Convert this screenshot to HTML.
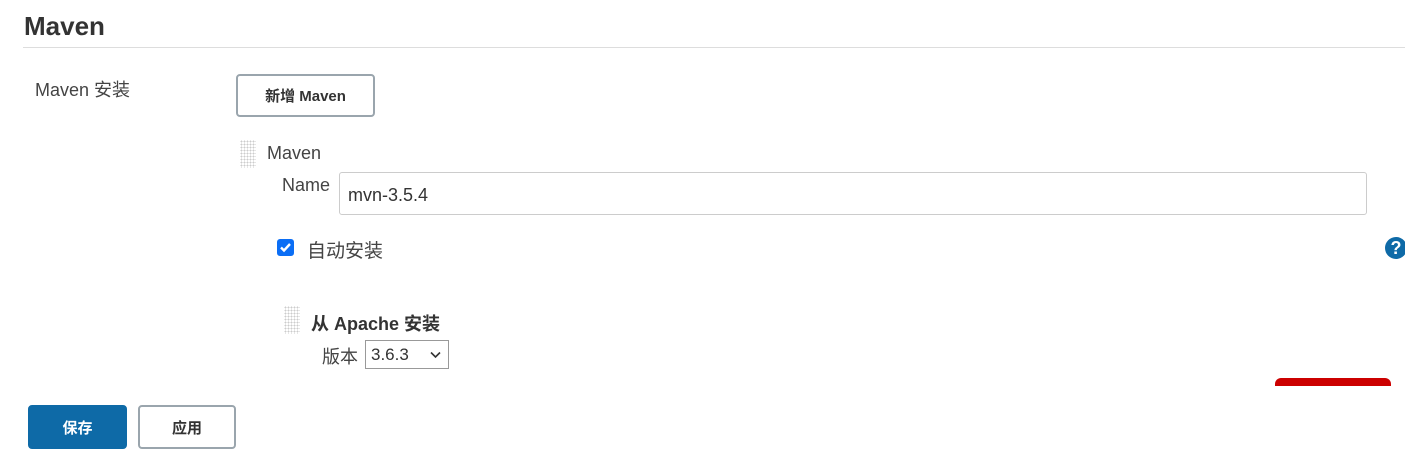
<!DOCTYPE html>
<html><head><meta charset="utf-8"><style>
body{margin:0;width:1405px;height:451px;overflow:hidden;background:#fff;font-family:"Liberation Sans","Noto Sans CJK SC",sans-serif;color:#333;position:relative}
.a{position:absolute;white-space:nowrap}
.grip{position:absolute;width:16px;background-image:radial-gradient(#ccc 0.8px,transparent 0.9px);background-size:3px 3px}
.btn{position:absolute;box-sizing:border-box;border:2px solid #9aa5ad;border-radius:4px;background:#fff;font-weight:bold;font-size:15px;color:#333;display:flex;align-items:center;justify-content:center}
</style></head><body>
<div class="a" style="left:24px;top:11px;font-size:26px;font-weight:bold;color:#333">Maven</div>
<div class="a" style="left:23px;top:47px;width:1382px;height:1px;background:#ddd"></div>
<div class="a" style="left:35px;top:76px;font-size:18px;color:#444">Maven 安装</div>
<div class="btn" style="left:236px;top:74px;width:139px;height:43px">新增 Maven</div>
<div class="grip" style="left:240px;top:140px;height:28px"></div>
<div class="a" style="left:267px;top:143px;font-size:18px;color:#444">Maven</div>
<div class="a" style="left:282px;top:175px;font-size:18px;color:#444">Name</div>
<div class="a" style="left:339px;top:172px;width:1028px;height:43px;border:1px solid #ccc;border-radius:3px;box-sizing:border-box"></div>
<div class="a" style="left:348px;top:185px;font-size:18px;color:#333">mvn-3.5.4</div>
<div class="a" style="left:277px;top:239px;width:17px;height:17px;background:#0b6ef5;border-radius:3px"><svg width="17" height="17" viewBox="0 0 17 17"><path d="M4 8.5l3 3 6-6.5" fill="none" stroke="#fff" stroke-width="2.4"/></svg></div>
<div class="a" style="left:307px;top:236px;font-size:19px;color:#444">自动安装</div>
<div class="a" style="left:1385px;top:237px;width:22px;height:22px;border-radius:50%;background:#0e6aa7;color:#fff;font-weight:bold;font-size:18px;text-align:center;line-height:22px">?</div>
<div class="grip" style="left:284px;top:306px;height:28px"></div>
<div class="a" style="left:311px;top:310px;font-size:18px;font-weight:bold;color:#333">从 Apache 安装</div>
<div class="a" style="left:322px;top:343px;font-size:18px;color:#444">版本</div>
<div class="a" style="left:365px;top:340px;width:84px;height:29px;border:1px solid #999;box-sizing:border-box;font-size:17px;color:#333;padding:4px 0 0 5px">3.6.3<svg style="position:absolute;right:7px;top:10px" width="11" height="8" viewBox="0 0 11 8"><path d="M1 1.5l4.5 4.5 4.5-4.5" fill="none" stroke="#333" stroke-width="1.6"/></svg></div>
<div class="a" style="left:1275px;top:378px;width:116px;height:10px;background:#cc0000;border-radius:6px 6px 0 0"></div>
<div class="a" style="left:1275px;top:386px;width:116px;height:6px;background:#fff"></div>
<div class="btn" style="left:28px;top:405px;width:99px;height:44px;background:#0e6aa7;border-color:#0e6aa7;color:#fff">保存</div>
<div class="btn" style="left:138px;top:405px;width:98px;height:44px">应用</div>
</body></html>
